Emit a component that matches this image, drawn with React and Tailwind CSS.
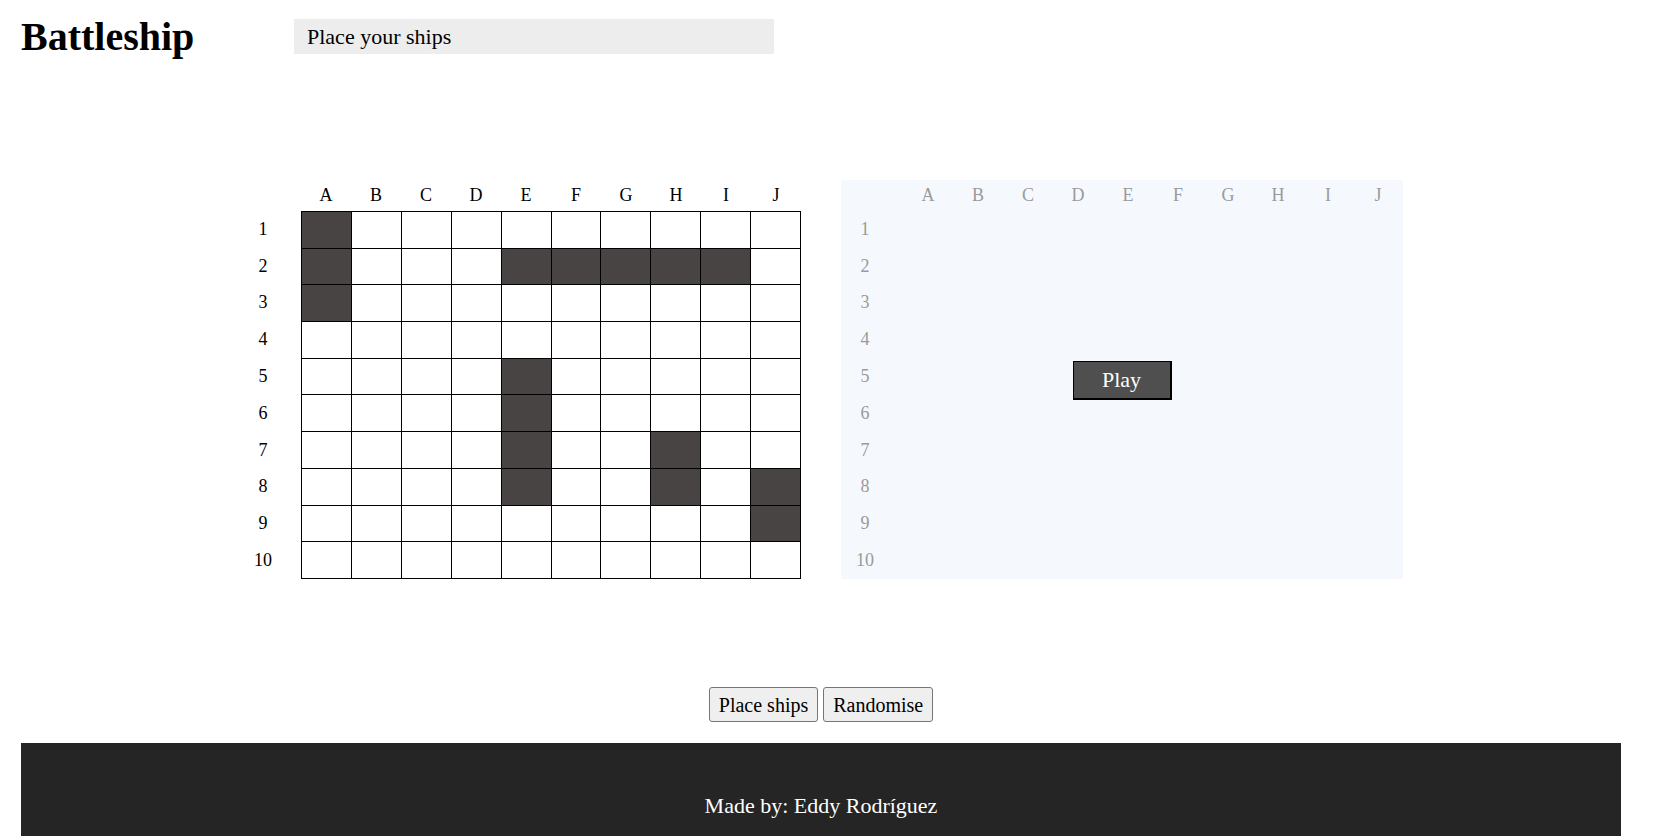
import React from "react";

const LETTERS = ["A", "B", "C", "D", "E", "F", "G", "H", "I", "J"];
const SHIPS = new Set([
  "0-0", "1-0", "2-0",
  "1-4", "1-5", "1-6", "1-7", "1-8",
  "4-4", "5-4", "6-4", "7-4",
  "6-7", "7-7",
  "7-9", "8-9",
]);

function Board({ enemy }) {
  const labelColor = enemy ? "text-[#9a9a9a]" : "text-black";
  return (
    <div className={`relative flex w-[562px] h-[399px] ${enemy ? "bg-[#f5f9fe]" : ""}`}>
      <div className="flex flex-col w-[62px]">
        <div className="h-[31px]" />
        <div className="grid grid-rows-[repeat(10,1fr)] h-[368px]">
          {LETTERS.map((_, r) => (
            <div key={r} className={`w-[48px] flex items-center justify-center text-[18px] ${labelColor}`}>
              {r + 1}
            </div>
          ))}
        </div>
      </div>
      <div className="flex flex-col w-[500px]">
        <div className="h-[31px] grid grid-cols-[repeat(10,50px)] items-center">
          {LETTERS.map((l) => (
            <div key={l} className={`text-center text-[18px] ${labelColor}`}>
              {l}
            </div>
          ))}
        </div>
        {enemy ? (
          <div className="h-[368px]" />
        ) : (
          <div className="grid grid-cols-[repeat(10,1fr)] grid-rows-[repeat(10,1fr)] h-[369px] w-[500px] border-l border-t border-black">
            {Array.from({ length: 100 }).map((_, i) => {
              const r = Math.floor(i / 10);
              const c = i % 10;
              const ship = SHIPS.has(`${r}-${c}`);
              return (
                <div
                  key={i}
                  className={`border-r border-b border-black ${ship ? "bg-[#474443]" : "bg-white"}`}
                />
              );
            })}
          </div>
        )}
      </div>
      {enemy && (
        <div className="absolute inset-0 flex items-center justify-center">
          <button className="w-[99px] h-[39px] mt-[1px] bg-[#4f4f4f] text-white text-[22px] border border-black border-r-2 border-b-2 leading-none">
            Play
          </button>
        </div>
      )}
    </div>
  );
}

export default function App() {
  return (
    <div className="min-h-[836px] bg-white text-black" style={{ fontFamily: '"Liberation Serif", "Times New Roman", serif' }}>
      <div className="ml-[21px] w-[1600px]">
        <header className="h-[72px] flex items-center">
          <h1 className="w-[273px] text-[40px] font-bold leading-none mt-[2px]">Battleship</h1>
          <div className="w-[480px] h-[35px] bg-[#ededed] flex items-center pl-[13px] text-[22px]">
            Place your ships
          </div>
        </header>
        <main className="pt-[108px] flex justify-center gap-[40px]">
          <Board />
          <Board enemy />
        </main>
        <div className="mt-[108px] flex justify-center gap-[5px]">
          <button className="h-[35px] px-[9px] bg-[#efefef] border border-[#767676] rounded-[3px] text-[20px] leading-none">
            Place ships
          </button>
          <button className="h-[35px] px-[9px] bg-[#efefef] border border-[#767676] rounded-[3px] text-[20px] leading-none">
            Randomise
          </button>
        </div>
        <footer className="mt-[21px] h-[150px] bg-[#252525] flex justify-center pt-[50px]">
          <p className="text-[22px] text-white leading-[25px]">Made by: Eddy Rodríguez</p>
        </footer>
      </div>
    </div>
  );
}
